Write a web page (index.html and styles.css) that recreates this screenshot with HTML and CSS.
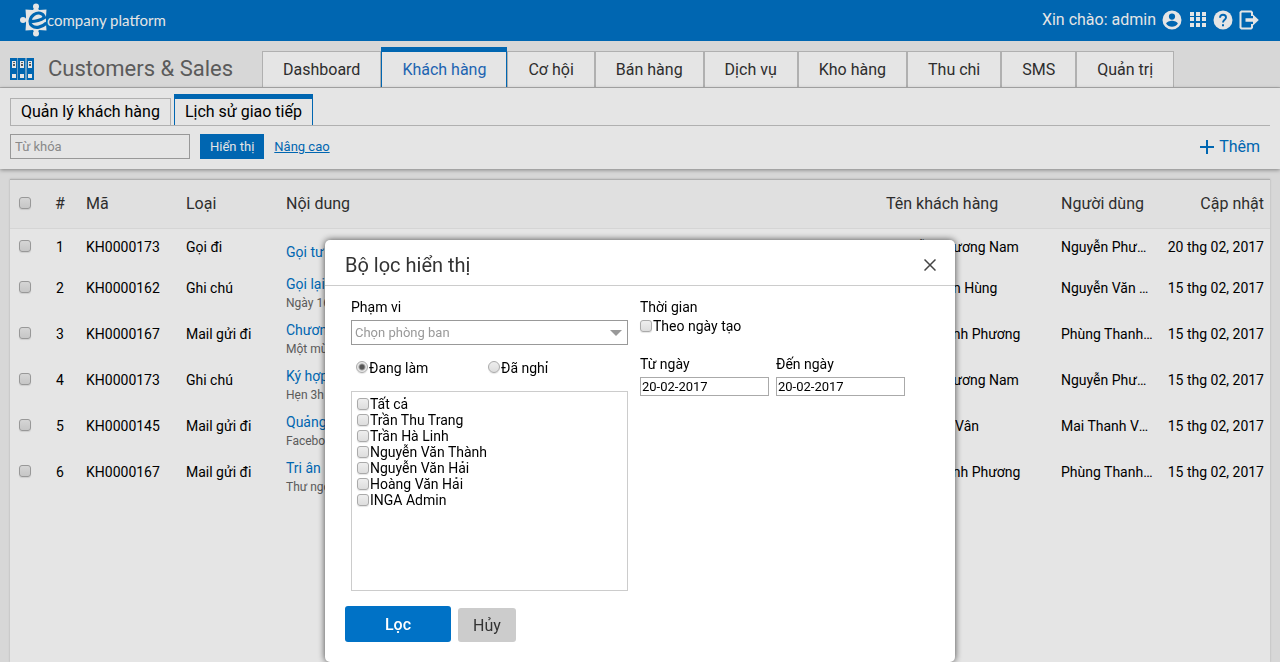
FILE: index.html
```html
<!DOCTYPE html>
<html lang="vi">
<head>
    <meta charset="UTF-8">
    <meta name="viewport" content="width=device-width, initial-scale=1.0">
    <title>Customers &amp; Sales</title>
    <link rel="stylesheet" href="styles.css">
</head>
<body>
<header class="topbar">
    <a class="logo" href="#">
        <svg width="27" height="34" viewBox="0 0 27 34" aria-hidden="true">
            <path fill="#fff" d="M5.500 6.500L13 7l1-1.500h4L19 7l7.500-.5-.5 7v7l.5 7L19 27l-1 1.500h-4L13 27l-7.500.5.500-7v-7z"/>
            <circle cx="16" cy="3.500" r="3" fill="#fff"/>
            <circle cx="16" cy="30.500" r="3" fill="#fff"/>
            <circle cx="3" cy="17" r="3" fill="#fff"/>
            <path fill="#fff" d="M3 15.500h4v3H3z"/>
            <path fill="none" stroke="#0072c6" stroke-width="3.200" d="M9 18.500C14 18.800 20 17.500 24.500 14.500C23 9.500 18 9 14 11.500C9.500 14.500 9 20.500 12 22.800C15.500 25.500 22 24.500 26.500 20"/>
        </svg>
        <span>company platform</span>
    </a>
    <div class="user-menu">
        <span>Xin chào: admin</span>
        <a href="#" aria-label="Tài khoản">
            <svg width="20" height="20" viewBox="0 0 20 20"><path fill="#fff" fill-rule="evenodd" d="M10 .5a9.500 9.500 0 1 0 0 19 9.500 9.500 0 0 0 0-19zM10 3.500a3 3 0 1 1 0 6.200 3 3 0 0 1 0-6.200zM4.200 13.800c.2-2 3.800-3 5.800-3s5.600 1 5.800 3c-1.300 1.900-3.400 3-5.800 3s-4.500-1.100-5.800-3z"/></svg>
        </a>
        <a href="#" aria-label="Ứng dụng">
            <svg class="grid-icon" width="16" height="16" viewBox="0 0 16 16"><path fill="#fff" d="M0 0h4v4H0zM6 0h4v4H6zM12 0h4v4h-4zM0 5h4v4H0zM6 5h4v4H6zM12 5h4v4h-4zM0 11h4v4H0zM6 11h4v4H6zM12 11h4v4h-4z"/></svg>
        </a>
        <a href="#" aria-label="Trợ giúp">
            <svg width="20" height="20" viewBox="0 0 20 20"><circle cx="10" cy="10" r="9.500" fill="#fff"/><path fill="none" stroke="#0072c6" stroke-width="1.900" d="M7 7.700C7 5.800 8.300 4.700 10 4.700s3 1.100 3 2.800c0 2.400-3 2.300-3 5.100"/><path fill="#0072c6" d="M9 14.300h2v2H9z"/></svg>
        </a>
        <a href="#" aria-label="Đăng xuất">
            <svg width="20" height="20" viewBox="0 0 20 20"><path fill="none" stroke="#fff" stroke-width="2" d="M13 6V2.500l-1-1H2.500l-1 1v15l1 1H12l1-1V14"/><path fill="#fff" d="M6.500 8.200H14V4.500l5.800 5.500-5.800 5.500v-3.700H6.500z"/></svg>
        </a>
    </div>
</header>

<div class="module-bar">
    <h1 class="module-title">
        <svg width="24" height="22" viewBox="0 0 24 22" aria-hidden="true">
            <path fill="#0072c6" d="M0 0h7.500v22H0zM8 0h7.500v22H8zM16.500 0H24v22h-7.500z"/>
            <path fill="#fff" d="M2 3h4v7H2zM10 3h4v7h-4zM18 3h4v7h-4zM2 16h4v4H2zM10 16h4v4h-4zM18 16h4v4h-4z"/>
            <path fill="#666" d="M3 4h2v1H3zM3 6h2v2H3zM11 4h2v1h-2zM11 6h2v2h-2zM19 4h2v1h-2zM19 6h2v2h-2z"/>
        </svg>
        Customers &amp; Sales
    </h1>
    <nav class="tabs">
        <a href="#">Dashboard</a>
        <a href="#" class="active">Khách hàng</a>
        <a href="#">Cơ hội</a>
        <a href="#">Bán hàng</a>
        <a href="#">Dịch vụ</a>
        <a href="#">Kho hàng</a>
        <a href="#">Thu chi</a>
        <a href="#">SMS</a>
        <a href="#">Quản trị</a>
    </nav>
</div>

<section class="toolbar">
    <nav class="subtabs">
        <a href="#">Quản lý khách hàng</a>
        <a href="#" class="active">Lịch sử giao tiếp</a>
    </nav>
    <form class="search">
        <input type="text" class="keyword" placeholder="Từ khóa" aria-label="Từ khóa">
        <button type="button" class="show-button">Hiển thị</button>
        <a href="#" class="advanced">Nâng cao</a>
        <a href="#" class="add">
            <svg width="14" height="14" viewBox="0 0 14 14" aria-hidden="true"><path fill="#0072c6" d="M6 0h2v6h6v2H8v6H6V8H0V6h6z"/></svg>
            Thêm
        </a>
    </form>
</section>

<main class="panel">
    <table>
        <thead>
            <tr>
                <th class="col-check"><input type="checkbox" aria-label="Chọn tất cả"></th>
                <th class="col-index">#</th>
                <th class="col-code">Mã</th>
                <th class="col-type">Loại</th>
                <th>Nội dung</th>
                <th class="col-customer">Tên khách hàng</th>
                <th class="col-user">Người dùng</th>
                <th class="col-date">Cập nhật</th>
            </tr>
        </thead>
        <tbody>
            <tr class="single">
                <td><input type="checkbox" aria-label="Chọn dòng 1"></td>
                <td class="col-index">1</td><td>KH0000173</td><td>Gọi đi</td>
                <td class="content"><a href="#">Gọi tư vấn</a></td>
                <td>Nguyễn Phương Nam</td><td>Nguyễn Phương Nam</td><td class="col-date">20 thg 02, 2017</td>
            </tr>
            <tr>
                <td><input type="checkbox" aria-label="Chọn dòng 2"></td>
                <td class="col-index">2</td><td>KH0000162</td><td>Ghi chú</td>
                <td class="content"><a href="#">Gọi lại</a><small>Ngày 16</small></td>
                <td>Nguyễn Văn Hùng</td><td>Nguyễn Văn Thành</td><td class="col-date">15 thg 02, 2017</td>
            </tr>
            <tr>
                <td><input type="checkbox" aria-label="Chọn dòng 3"></td>
                <td class="col-index">3</td><td>KH0000167</td><td>Mail gửi đi</td>
                <td class="content"><a href="#">Chương trình</a><small>Một mùa</small></td>
                <td>Phùng Thanh Phương</td><td>Phùng Thanh Phương</td><td class="col-date">15 thg 02, 2017</td>
            </tr>
            <tr>
                <td><input type="checkbox" aria-label="Chọn dòng 4"></td>
                <td class="col-index">4</td><td>KH0000173</td><td>Ghi chú</td>
                <td class="content"><a href="#">Ký hợp đồng</a><small>Hẹn 3h</small></td>
                <td>Nguyễn Phương Nam</td><td>Nguyễn Phương Nam</td><td class="col-date">15 thg 02, 2017</td>
            </tr>
            <tr>
                <td><input type="checkbox" aria-label="Chọn dòng 5"></td>
                <td class="col-index">5</td><td>KH0000145</td><td>Mail gửi đi</td>
                <td class="content"><a href="#">Quảng cáo</a><small>Facebook</small></td>
                <td>Mai Thanh Vân</td><td>Mai Thanh Vân</td><td class="col-date">15 thg 02, 2017</td>
            </tr>
            <tr>
                <td><input type="checkbox" aria-label="Chọn dòng 6"></td>
                <td class="col-index">6</td><td>KH0000167</td><td>Mail gửi đi</td>
                <td class="content"><a href="#">Tri ân</a><small>Thư ngỏ</small></td>
                <td>Phùng Thanh Phương</td><td>Phùng Thanh Phương</td><td class="col-date">15 thg 02, 2017</td>
            </tr>
        </tbody>
    </table>
</main>

<div class="backdrop">
    <form class="modal" role="dialog" aria-labelledby="modal-title">
        <div class="modal-header">
            <h2 id="modal-title">Bộ lọc hiển thị</h2>
            <button type="button" class="close" aria-label="Đóng">
                <svg width="12" height="12" viewBox="0 0 12 12"><path stroke="#444" stroke-width="1.500" d="M.5.5l11 11M11.500.5l-11 11"/></svg>
            </button>
        </div>
        <div class="modal-body">
            <div class="scope">
                <label class="caption" for="department">Phạm vi</label>
                <div class="select-wrap">
                    <select id="department">
                        <option>Chọn phòng ban</option>
                    </select>
                    <svg width="12" height="6" viewBox="0 0 12 6" aria-hidden="true"><path fill="#999" d="M0 0h12L6 6z"/></svg>
                </div>
                <div class="radios">
                    <label><input type="radio" name="status" checked>Đang làm</label>
                    <label><input type="radio" name="status">Đã nghỉ</label>
                </div>
                <div class="people">
                    <label><input type="checkbox">Tất cả</label>
                    <label><input type="checkbox">Trần Thu Trang</label>
                    <label><input type="checkbox">Trần Hà Linh</label>
                    <label><input type="checkbox">Nguyễn Văn Thành</label>
                    <label><input type="checkbox">Nguyễn Văn Hải</label>
                    <label><input type="checkbox">Hoàng Văn Hải</label>
                    <label><input type="checkbox">INGA Admin</label>
                </div>
            </div>
            <div class="period">
                <div class="caption">Thời gian</div>
                <label class="by-date"><input type="checkbox">Theo ngày tạo</label>
                <div class="dates">
                    <div class="date-field">
                        <label for="from">Từ ngày</label>
                        <input type="text" id="from" value="20-02-2017">
                    </div>
                    <div class="date-field">
                        <label for="to">Đến ngày</label>
                        <input type="text" id="to" value="20-02-2017">
                    </div>
                </div>
            </div>
        </div>
        <div class="modal-footer">
            <button type="button" class="apply">Lọc</button>
            <button type="button" class="cancel">Hủy</button>
        </div>
    </form>
</div>
</body>
</html>
```

FILE: styles.css
```css
* {
    margin: 0;
    padding: 0;
    box-sizing: border-box;
}

body {
    min-height: 100vh;
    display: flex;
    flex-direction: column;
    background: #f0f0f0;
    color: #000;
    font-family: Roboto, "Liberation Sans", sans-serif;
    font-size: 14px;
    line-height: 16px;
    overflow: hidden;
}

input,
select,
button {
    font-family: inherit;
    font-size: inherit;
}

a {
    color: #0072c6;
    text-decoration: none;
}

button {
    border: none;
    cursor: pointer;
}

svg {
    display: block;
}

input[type=checkbox],
input[type=radio] {
    appearance: none;
    flex: none;
    width: 12px;
    height: 12px;
    border: 1px solid #aaa;
    border-radius: 3px;
    background: linear-gradient(#eee, #ddd);
    box-shadow: 0 1px 1px rgba(0,0,0,0.1);
}

input[type=radio] {
    border-radius: 50%;
}

input[type=radio]:checked {
    background: radial-gradient(circle, #555 2px, #e8e8e8 4px);
}

.topbar {
    display: flex;
    justify-content: space-between;
    align-items: center;
    height: 41px;
    padding: 0 21px 2px 20px;
    background: #0072c6;
    color: #fff;
}

.logo {
    display: flex;
    align-items: center;
    color: #fff;
    font-family: Lato, sans-serif;
    font-size: 15px;
}

.user-menu {
    display: flex;
    align-items: center;
    gap: 6px;
    font-size: 16px;
}

.user-menu .grid-icon {
    margin: 0 1px 0 2px;
}

.module-bar {
    display: flex;
    align-items: flex-end;
    height: 47px;
    padding-left: 10px;
    border-bottom: 1px solid #c4c4c4;
}

.module-title {
    display: flex;
    align-items: center;
    gap: 14px;
    width: 252px;
    height: 37px;
    color: #666;
    font-size: 22px;
    font-weight: 400;
}

.tabs {
    display: flex;
    align-items: flex-end;
}

.tabs a {
    padding: 0 20px;
    border: 1px solid #c4c4c4;
    border-bottom: none;
    background: #fff;
    color: #333;
    font-size: 16px;
    line-height: 35px;
}

.tabs .active {
    border-color: #0072c6;
    border-top-width: 5px;
    color: #1f6fc6;
}

.toolbar {
    padding: 6px 10px 10px;
    background: #fff;
    box-shadow: 0 1px 4px rgba(0,0,0,0.4);
}

.subtabs {
    display: flex;
    align-items: flex-end;
    gap: 3px;
    border-bottom: 1px solid #c4c4c4;
}

.subtabs a {
    padding: 0 10px;
    border: 1px solid #c4c4c4;
    border-bottom: none;
    color: #000;
    font-size: 16px;
    line-height: 26px;
}

.subtabs .active {
    border-color: #0072c6;
    border-top-width: 5px;
}

.search {
    display: flex;
    align-items: center;
    padding-top: 8px;
    gap: 10px;
    font-size: 13px;
}

.keyword {
    width: 180px;
    height: 25px;
    padding: 0 4px;
    border: 1px solid #aaa;
    background: #fff;
}

.keyword::placeholder {
    color: #999;
}

.show-button {
    height: 25px;
    padding: 0 10px;
    background: #0072c6;
    color: #fff;
}

.advanced {
    text-decoration: underline;
}

.add {
    display: flex;
    align-items: center;
    gap: 5px;
    margin-left: auto;
    padding-right: 10px;
    font-size: 16px;
}

.panel {
    flex: 1;
    margin: 10px 10px 0;
    border-top: 1px solid #c4c4c4;
    background: #fff;
    box-shadow: 0 0 2px rgba(0,0,0,0.2);
}

table {
    width: 100%;
    border-collapse: collapse;
    table-layout: fixed;
}

th {
    height: 48px;
    border-bottom: 1px solid #eee;
    background: #fafafa;
    color: #333;
    font-size: 16px;
    font-weight: 400;
    text-align: left;
}

td {
    height: 46px;
    padding-top: 10px;
    overflow: hidden;
    text-overflow: ellipsis;
    white-space: nowrap;
    vertical-align: top;
}

th:first-child,
td:first-child {
    padding-left: 9px;
}

.single td {
    height: 42px;
}

.col-check {
    width: 34px;
}

.col-index {
    width: 32px;
    text-align: center;
}

.col-code,
.col-type {
    width: 100px;
}

th.col-code,
td:nth-child(3),
th.col-type,
td:nth-child(4) {
    padding-left: 10px;
}

th:nth-child(5),
td.content {
    padding-left: 10px;
}

.col-customer {
    width: 175px;
}

.col-user {
    width: 101px;
}

td:nth-child(7) {
    padding-right: 9px;
}

.col-date {
    width: 108px;
    padding-right: 6px;
    text-align: right;
}

.content {
    padding-top: 5px;
    line-height: 19px;
}

.single .content {
    padding-top: 14px;
}

.content a {
    display: block;
}

.content small {
    display: block;
    color: #666;
    font-size: 12px;
}

.backdrop {
    position: fixed;
    inset: 0;
    display: flex;
    justify-content: center;
    align-items: flex-start;
    padding-top: 240px;
    background: rgba(0,0,0,0.1);
}

.modal {
    width: 630px;
    padding-bottom: 20px;
    border-radius: 5px;
    background: #fff;
    box-shadow: 0 0 7px rgba(0,0,0,0.7);
}

.modal-header {
    display: flex;
    justify-content: space-between;
    align-items: center;
    height: 46px;
    padding: 4px 19px 0 20px;
    border-bottom: 1px solid #ccc;
    color: #333;
}

.modal-header h2 {
    font-size: 20px;
    font-weight: 400;
    line-height: 24px;
}

.close {
    background: none;
}

.modal-body {
    display: flex;
    gap: 12px;
    padding: 13px 26px 15px;
}

.modal label {
    display: flex;
    align-items: center;
}

.scope {
    width: 277px;
}

.caption {
    height: 16px;
}

.select-wrap {
    position: relative;
    margin-top: 5px;
}

.select-wrap select {
    appearance: none;
    display: block;
    width: 100%;
    height: 25px;
    padding: 0 3px;
    border: 1px solid #999;
    background: #fff;
    color: #999;
    font-size: 13px;
}

.select-wrap svg {
    position: absolute;
    top: 10px;
    right: 6px;
    pointer-events: none;
}

.radios {
    display: flex;
    padding: 15px 5px;
}

.radios label {
    width: 132px;
    gap: 1px;
}

.radios input {
    margin-bottom: 3px;
}

.people {
    height: 200px;
    padding: 4px 5px;
    border: 1px solid #ccc;
}

.people label,
.by-date {
    gap: 1px;
}

.by-date {
    margin-top: 3px;
}

.dates {
    display: flex;
    gap: 7px;
    margin-top: 22px;
}

.date-field input {
    width: 129px;
    height: 19px;
    margin-top: 5px;
    padding: 0 1px;
    border: 1px solid #aaa;
    font-size: 13px;
}

.modal-footer {
    display: flex;
    align-items: flex-end;
    gap: 7px;
    padding: 0 20px;
    font-size: 16px;
}

.apply {
    width: 106px;
    height: 36px;
    border-radius: 3px;
    background: #0072c6;
    color: #fff;
    font-weight: 500;
}

.cancel {
    height: 34px;
    padding: 0 15px;
    border-radius: 3px;
    background: #ccc;
    color: #333;
}
```
